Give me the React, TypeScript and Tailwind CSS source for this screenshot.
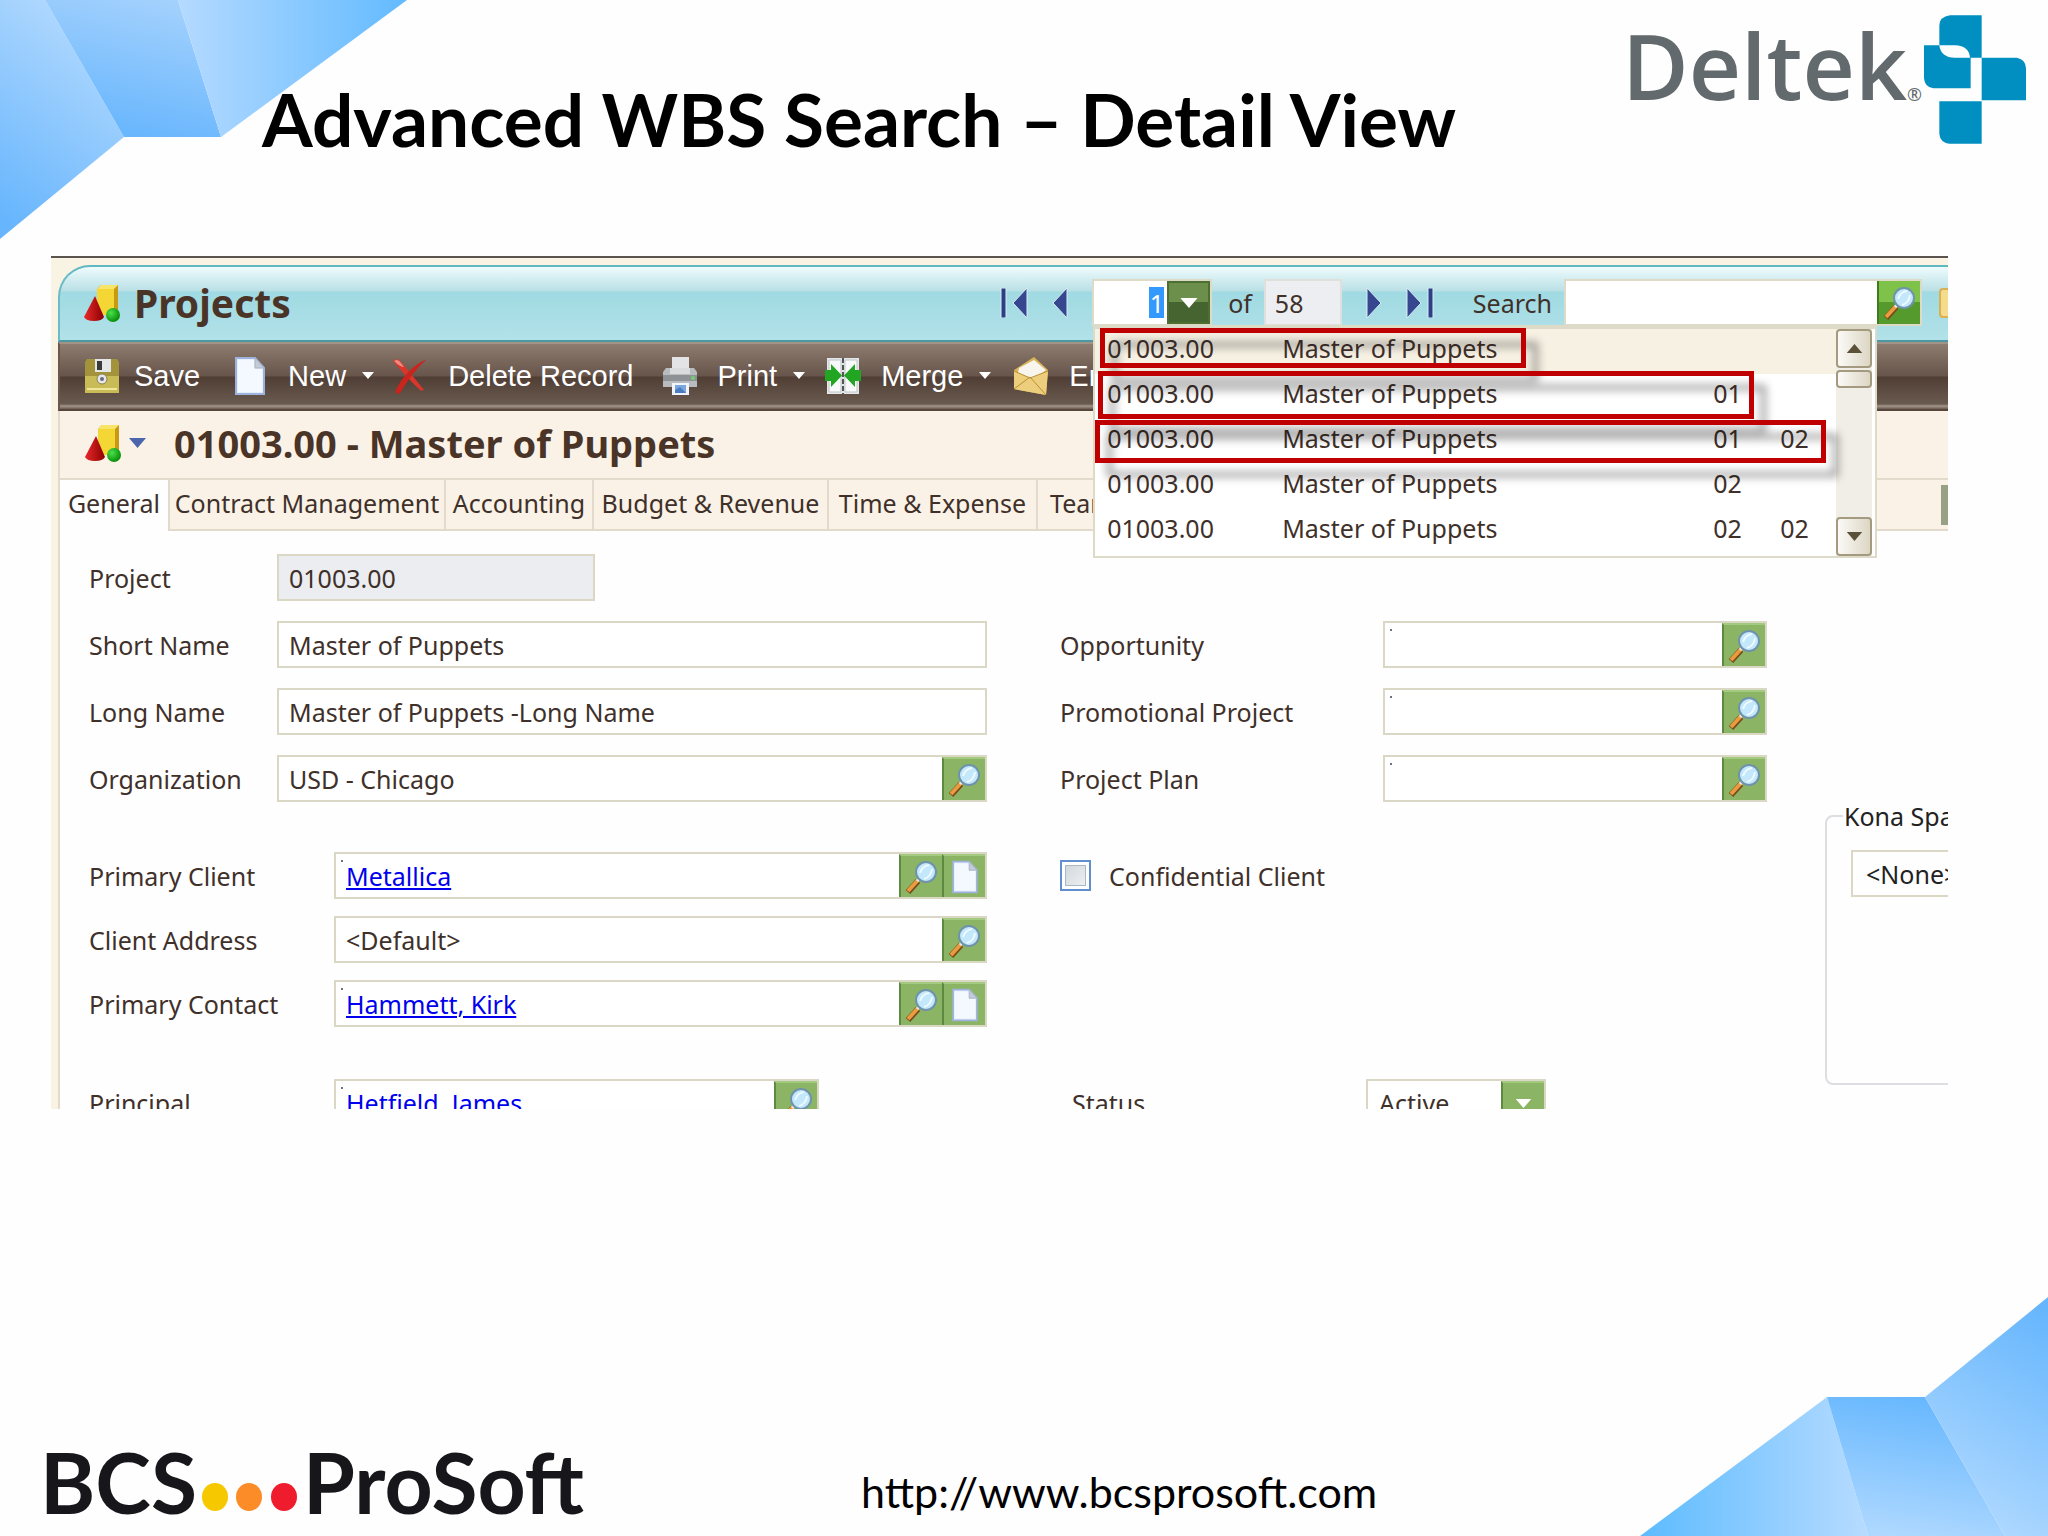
import type { ReactNode } from 'react';

const rows = [
  ['01003.00', 'Master of Puppets', '', ''],
  ['01003.00', 'Master of Puppets', '01', ''],
  ['01003.00', 'Master of Puppets', '01', '02'],
  ['01003.00', 'Master of Puppets', '02', ''],
  ['01003.00', 'Master of Puppets', '02', '02'],
];

const tabs = [
  { name: 'Contract Management', width: 'w-[276px]' },
  { name: 'Accounting', width: 'w-[148px]' },
  { name: 'Budget & Revenue', width: 'w-[235px]' },
  { name: 'Time & Expense', width: 'w-[209px]' },
];

function ShapesIcon() {
  return (
    <svg viewBox="0 0 36 38" className="h-[38px] w-9 shrink-0" aria-hidden="true">
      <defs>
        <linearGradient id="cone" x1="0" x2="1">
          <stop offset="0" stopColor="#e8292b" />
          <stop offset="1" stopColor="#8c0000" />
        </linearGradient>
        <radialGradient id="ball" cx="0.35" cy="0.35" r="0.7">
          <stop offset="0" stopColor="#4be04b" />
          <stop offset="1" stopColor="#068a06" />
        </radialGradient>
      </defs>
      <path d="M13 5 17 1H34V26L30 31H13Z" fill="#c79a12" />
      <path d="M13 5H30V31H13Z" fill="#f4d735" />
      <path d="M13 5 17 1H34L30 5Z" fill="#f7e468" />
      <path d="M11 12 20 33Q18 37 10 37Q2 37 0 33Z" fill="url(#cone)" />
      <circle cx="29" cy="31" r="7" fill="url(#ball)" />
    </svg>
  );
}

function SaveIcon() {
  return (
    <svg viewBox="0 0 36 36" className="size-9 shrink-0" aria-hidden="true">
      <path d="M3 1H33L35 4V35H1V4Z" fill="#a3933a" />
      <path d="M1 18H35V35H1Z" fill="#c9bb55" />
      <path d="M11 1H27V14H11Z" fill="#e4e6e8" />
      <path d="M13 3H18V12H13Z" fill="#3a3a38" />
      <circle cx="18" cy="21" r="5" fill="#e6e6ee" stroke="#8c8448" />
      <circle cx="18" cy="21" r="2" fill="#6a6a7a" />
      <path d="M3 31H33" stroke="#efe69a" strokeWidth="2" />
    </svg>
  );
}

function PageIcon({ className }: { className: string }) {
  return (
    <svg viewBox="0 0 32 40" className={className} aria-hidden="true">
      <path d="M2 2H21L30 12V38H2Z" fill="#e6eefa" stroke="#9db2dd" strokeWidth="2" />
      <path d="M4 4H20V13H28V36H4Z" fill="#f4f9ff" />
      <path d="M21 2 30 12H21Z" fill="#c3cbd8" stroke="#aab4c8" />
    </svg>
  );
}

function DeleteIcon() {
  return (
    <svg viewBox="0 0 36 36" className="size-9 shrink-0" aria-hidden="true">
      <path d="M1 3Q6 -1 9 4Q17 13 32 32Q29 34 27 31Q16 21 1 3Z" fill="#d9362c" />
      <path d="M35 1Q21 13 8 35Q5 37 3 34Q13 11 35 1Z" fill="#c9241d" />
      <path d="M2 3Q6 0 9 5L12 9Q8 9 2 3Z" fill="#ef8a80" />
    </svg>
  );
}

function PrintIcon() {
  return (
    <svg viewBox="0 0 36 40" className="h-10 w-9 shrink-0" aria-hidden="true">
      <path d="M10 1H27V14H10Z" fill="#e3e3e6" />
      <path d="M4 12H32L35 16V31H1V16Z" fill="#b9bcbe" />
      <path d="M1 19H35V25H1Z" fill="#8e9294" />
      <path d="M8 12H28V18H8Z" fill="#d9dbdc" />
      <circle cx="31" cy="22" r="2" fill="#6fd06f" />
      <path d="M10 27H27V39H10Z" fill="#f1f5fb" />
      <path d="M13 29H24V37H13Z" fill="#7ba7dd" />
      <path d="M13 34 18 31 24 37H13Z" fill="#4b7dc2" />
    </svg>
  );
}

function MergeIcon() {
  return (
    <svg viewBox="0 0 36 38" className="h-[38px] w-9 shrink-0" aria-hidden="true">
      <path d="M2 1H34V37H2Z" fill="#e4e7ea" />
      <path d="M4 3H16V35H4ZM20 3H32V35H20Z" fill="#f8f9fa" stroke="#c2c6ca" />
      <path d="M18 1V37" stroke="#555" strokeWidth="2" strokeDasharray="5 2" />
      <path d="M0 13H6V7L17 18.500L6 30V24H0Z" fill="#22a522" />
      <path d="M36 13H30V7L19 18.500L30 30V24H36Z" fill="#22a522" />
    </svg>
  );
}

function MailIcon() {
  return (
    <svg viewBox="0 0 36 40" className="h-10 w-9 shrink-0" aria-hidden="true">
      <path d="M1 14 21 1 35 14 33 39 1 33Z" fill="#d9b458" />
      <path d="M6 12 21 4 33 14 19 25 5 17Z" fill="#f8f4ee" />
      <path d="M1 15 18 22 35 15 33 39 1 33Z" fill="#ecce7c" />
      <path d="M1 33 17 21 33 39M1 15 17 22 35 15" fill="none" stroke="#b98f33" />
    </svg>
  );
}

function Magnifier() {
  return (
    <svg viewBox="0 0 36 36" className="size-9" aria-hidden="true">
      <path d="M4 33 14 22" stroke="#7a4a1a" strokeWidth="6" />
      <path d="M4 32 14 21" stroke="#e99b3f" strokeWidth="4" />
      <path d="M13 22 17 18" stroke="#e8e8e8" strokeWidth="3" />
      <circle cx="22" cy="13" r="10" fill="#c3e7fb" stroke="#6f93ab" strokeWidth="2" />
      <path d="M16 14Q18 7 25 6M20 20Q27 18 28 10" fill="none" stroke="#eefaff" strokeWidth="2" />
    </svg>
  );
}

function Caret({ className }: { className: string }) {
  return (
    <svg viewBox="0 0 12 7" className={className} aria-hidden="true">
      <path d="M0 0H12L6 7Z" fill="currentColor" />
    </svg>
  );
}

// record navigation arrows; pass `bar` for first/last, `flip` for forward
function NavArrow({ label, bar, flip }: { label: string; bar?: boolean; flip?: boolean }) {
  return (
    <button aria-label={label} className={flip ? 'rotate-180' : ''}>
      <svg viewBox={bar ? '0 0 28 30' : '12 0 16 30'} className={bar ? 'h-[30px] w-7' : 'h-[30px] w-4'} aria-hidden="true">
        {bar && <path d="M1 0H6V30H1Z" fill="#2f3f86" stroke="#d7eef4" />}
        <path d="M27 0V30L13 15Z" fill="#36478f" stroke="#d7eef4" />
      </svg>
    </button>
  );
}

function GreenButton({ label, children }: { label: string; children: ReactNode }) {
  return (
    <button
      aria-label={label}
      className="flex w-[43px] shrink-0 items-center justify-center border-t-2 border-l-2 border-t-[#a3cb80] border-l-[#5d8a40] bg-[#8bb565]"
    >
      {children}
    </button>
  );
}

type FieldProps = {
  id: string;
  label: string;
  value?: string;
  link?: boolean;
  search?: boolean;
  page?: boolean;
  labelWidth: string;
  boxWidth?: string;
  readOnly?: boolean;
};

function Field({ id, label, value = '', link, search, page, labelWidth, boxWidth = 'flex-1', readOnly }: FieldProps) {
  const marked = link || value === '';
  return (
    <div className="flex h-[47px] items-center">
      <label htmlFor={id} className={`shrink-0 whitespace-nowrap ${labelWidth}`}>
        {label}
      </label>
      <div className={`relative flex h-[47px] min-w-0 border-2 border-[#dad8c5] ${boxWidth} ${readOnly ? 'bg-[#ebedf0]' : 'bg-white'}`}>
        {marked && <span className="absolute top-[6px] left-[5px] size-[2px] bg-gray-500" />}
        {link ? (
          <span className="flex flex-1 items-center px-[10px]">
            <a id={id} href="#" className="text-[#0000ee] underline decoration-2 underline-offset-2">
              {value}
            </a>
          </span>
        ) : (
          <input id={id} defaultValue={value} readOnly={readOnly} className="min-w-0 flex-1 bg-transparent px-[10px] outline-none" />
        )}
        {search && (
          <GreenButton label={`Look up ${label}`}>
            <Magnifier />
          </GreenButton>
        )}
        {page && (
          <GreenButton label={`Open ${label}`}>
            <PageIcon className="h-[34px] w-7" />
          </GreenButton>
        )}
      </div>
    </div>
  );
}

function RecordList() {
  return (
    <div className="absolute top-[44px] -left-px z-10 w-[784px] border-2 border-t-4 border-[#dedac8] bg-white">
      <div className="flex">
        <table className="flex-1 table-fixed border-collapse">
          <tbody className="block pb-[2px]">
            {rows.map((row, i) => (
              <tr key={i} className={i === 0 ? 'flex h-[45px] items-center bg-[#f7f1e4] pb-2' : 'flex h-[45px] items-center pb-2'}>
                <td className="w-[187px] pl-3">{row[0]}</td>
                <td className="w-[431px]">{row[1]}</td>
                <td className="w-[67px]">{row[2]}</td>
                <td>{row[3]}</td>
              </tr>
            ))}
          </tbody>
        </table>
        <div className="flex w-9 flex-col bg-[#f1eee7]">
          <button aria-label="Scroll up" className="flex h-[39px] items-center justify-center rounded-sm border-2 border-[#a39a80] bg-linear-to-r from-[#fbfaf6] to-[#dcd6c4] text-[#5a5138]">
            <Caret className="h-[9px] w-[17px] rotate-180" />
          </button>
          <div className="mt-[2px] h-[18px] rounded-sm border-2 border-[#a39a80] bg-linear-to-r from-[#fbfaf6] to-[#dcd6c4]" />
          <button aria-label="Scroll down" className="mt-auto flex h-[39px] items-center justify-center rounded-sm border-2 border-[#a39a80] bg-linear-to-r from-[#fbfaf6] to-[#dcd6c4] text-[#5a5138]">
            <Caret className="h-[9px] w-[17px]" />
          </button>
        </div>
        <div className="w-[3px]" />
      </div>
      {/* call-outs round the three WBS levels */}
      <div className="absolute -top-px left-[5px] h-10 w-[426px] border-5 border-[#c00000] drop-shadow-[12px_14px_4px_rgba(0,0,0,0.4)]" />
      <div className="absolute top-[42px] left-[3px] h-12 w-[656px] border-5 border-[#c00000] drop-shadow-[12px_14px_4px_rgba(0,0,0,0.4)]" />
      <div className="absolute top-[91px] left-0 h-[43px] w-[731px] border-5 border-[#c00000] drop-shadow-[12px_14px_4px_rgba(0,0,0,0.4)]" />
    </div>
  );
}

function TitleBar() {
  return (
    <div className="flex h-[77px] items-center rounded-tl-[32px] border-2 border-r-0 border-t-[#5fb8c0] border-b-[#4b98a2] border-l-[#6bbcc6] bg-[linear-gradient(#eefbfd_0,#b9e0e5_24px,#a0dae2_25px,#b2e1e9_100%)] pb-[2px] pl-6">
      <ShapesIcon />
      <h2 className="ml-[14px] flex-1 text-[39px] font-bold text-[#4a3428]">Projects</h2>
      <NavArrow label="First record" bar />
      <span className="w-6" />
      <NavArrow label="Previous record" />
      <div className="relative ml-6 flex h-[47px] w-[120px] border-2 border-[#dedac8] bg-white">
        <span className="flex flex-1 items-center justify-end">
          <input aria-label="Record" defaultValue="1" className="h-[31px] w-[15px] bg-[#3399ff] text-right text-white outline-none" />
          <span className="w-[3px]" />
        </span>
        <button aria-label="Show records" className="flex w-[43px] items-center justify-center border-2 border-[#4c7032] bg-[linear-gradient(#6c8f4c_0_50%,#466430_50%)] text-white">
          <Caret className="h-[10px] w-[18px]" />
        </button>
        <RecordList />
      </div>
      <span className="ml-4">of</span>
      <input aria-label="Record count" readOnly defaultValue="58" className="ml-3 h-[47px] w-[78px] border-2 border-[#dfe0dc] bg-[#eceef1] px-[9px]" />
      <span className="w-6" />
      <NavArrow label="Next record" flip />
      <span className="w-6" />
      <NavArrow label="Last record" bar flip />
      <label htmlFor="search" className="ml-[39px]">
        Search
      </label>
      <div className="ml-3 flex h-[47px] w-[358px] border-2 border-[#dedac8] bg-white">
        <input id="search" className="min-w-0 flex-1 px-2 outline-none" />
        <button aria-label="Run search" className="flex w-[43px] items-center justify-center border-l-2 border-[#3f7a20] bg-[linear-gradient(#7fc24a_0_50%,#559a2c_50%)]">
          <Magnifier />
        </button>
      </div>
      <span className="ml-[17px] h-[30px] w-[9px] rounded-l-sm border-2 border-r-0 border-[#d9b054] bg-[#f5dc8c]" />
    </div>
  );
}

function Toolbar() {
  return (
    <div className="flex h-[69px] items-center border-t-2 border-b-2 border-l-2 border-t-[#a39286] border-b-[#56463c] border-l-[#6a584c] bg-[linear-gradient(#8f7c70_0,#67544a_32px,#503e35_33px,#695a4f_60px,#a5968a_62px,#6a5a4f_65px)] pb-[2px] pl-6 font-['Liberation_Sans',sans-serif] text-[29px] text-white">
      <button className="flex items-center gap-[14px]">
        <SaveIcon />
        Save
      </button>
      <button className="ml-8 flex items-center gap-5">
        <PageIcon className="h-10 w-9 shrink-0" />
        New
        <Caret className="-ml-1 h-[7px] w-3" />
      </button>
      <button className="ml-[18px] flex items-center gap-5">
        <DeleteIcon />
        Delete Record
      </button>
      <button className="ml-7 flex items-center gap-5">
        <PrintIcon />
        Print
        <Caret className="-ml-1 h-[7px] w-3" />
      </button>
      <button className="ml-5 flex items-center gap-5">
        <MergeIcon />
        Merge
        <Caret className="-ml-1 h-[7px] w-3" />
      </button>
      <button className="ml-[22px] flex items-center gap-5">
        <MailIcon />
        Email
      </button>
    </div>
  );
}

function ProjectForm() {
  return (
    <div className="flex border-l-2 border-[#e6d8cb] bg-[#fefefe] pt-[23px] pl-[29px]">
      <div className="min-w-0 flex-[898]">
        <div className="flex flex-col gap-5">
          <Field id="project" label="Project" value="01003.00" labelWidth="w-[188px]" boxWidth="w-[318px]" readOnly />
          <Field id="short" label="Short Name" value="Master of Puppets" labelWidth="w-[188px]" />
          <Field id="long" label="Long Name" value="Master of Puppets -Long Name" labelWidth="w-[188px]" />
          <Field id="org" label="Organization" value="USD - Chicago" labelWidth="w-[188px]" search />
        </div>
        <div className="mt-[50px] flex flex-col gap-[17px]">
          <Field id="client" label="Primary Client" value="Metallica" labelWidth="w-[245px]" link search page />
          <Field id="address" label="Client Address" value="<Default>" labelWidth="w-[245px]" search />
          <Field id="contact" label="Primary Contact" value="Hammett, Kirk" labelWidth="w-[245px]" link search page />
        </div>
        <div className="mt-[52px] h-[30px] overflow-hidden">
          <Field id="principal" label="Principal" value="Hetfield, James" labelWidth="w-[245px]" boxWidth="w-[485px]" link search />
        </div>
      </div>
      <div className="ml-[73px] min-w-0 flex-[707] pt-[67px]">
        <div className="flex flex-col gap-5">
          <Field id="opportunity" label="Opportunity" labelWidth="w-[323px]" search />
          <Field id="promo" label="Promotional Project" labelWidth="w-[323px]" search />
          <Field id="plan" label="Project Plan" labelWidth="w-[323px]" search />
        </div>
        <label className="mt-[50px] flex h-[47px] items-center gap-[18px]">
          <input
            type="checkbox"
            className="size-[31px] appearance-none border-2 border-[#5f8fcf] bg-linear-to-br from-[#ccd3d8] to-[#f3f5f6] shadow-[inset_0_0_0_3px_#fff,inset_0_0_0_4px_#a9b8c8]"
          />
          Confidential Client
        </label>
        <div className="mt-[180px] flex h-[30px] items-start overflow-hidden pl-3">
          <label htmlFor="status" className="flex h-[47px] w-[294px] items-center">
            Status
          </label>
          <div className="relative flex h-[47px] w-[180px] border-2 border-[#dad8c5] bg-white">
            <select id="status" className="flex-1 appearance-none px-[11px] outline-none">
              <option>Active</option>
            </select>
            <span className="pointer-events-none flex w-[43px] items-center justify-center border-t-2 border-l-2 border-t-[#a3cb80] border-l-[#5d8a40] bg-[#8bb565] text-white">
              <Caret className="h-[9px] w-[17px]" />
            </span>
          </div>
        </div>
      </div>
      <div className="ml-[58px] min-w-0 flex-[123] overflow-hidden pt-[246px]">
        <fieldset className="h-[285px] w-[300px] rounded-lg border-2 border-[#dcdee2] pl-6 text-[#222]">
          <legend className="-ml-2 px-px">Kona Space</legend>
          <select aria-label="Kona Space" className="mt-[18px] h-[47px] w-[240px] appearance-none border-2 border-[#dad8c5] px-[13px]">
            <option>&lt;None&gt;</option>
          </select>
        </fieldset>
      </div>
    </div>
  );
}

function DeltekLogo() {
  return (
    <div className="flex items-start pr-[22px]">
      <span className="font-['Open_Sans',sans-serif] text-[91px] leading-[130px] font-semibold text-[#636a6d]">Deltek</span>
      <span className="mt-[84px] text-[18px] leading-5 text-[#636a6d]">®</span>
      <svg viewBox="972 46 306 386" className="mt-[15px] ml-[2px] h-[129px] w-[102px]" fill="#008fc0" aria-hidden="true">
        <path d="M1050 46H1145V174H1110Q1108 138 1065 136H1018V78Q1018 50 1050 46Z" />
        <path d="M972 136H1018Q1022 172 1065 174H1112V265H1000Q974 262 972 235Z" />
        <path d="M1145 174H1250Q1276 178 1278 205V301H1145Z" />
        <path d="M1018 304H1145V432H1048Q1020 428 1018 402Z" />
      </svg>
    </div>
  );
}

export default function App() {
  return (
    <div className="relative flex min-h-screen flex-col overflow-hidden bg-[#fefefe] font-['Noto_Sans',sans-serif] text-[25px] leading-8 text-[#40302a]">
      <svg viewBox="0 0 408 240" className="absolute top-0 left-0 h-[240px] w-[408px]" aria-hidden="true">
        <defs>
          <linearGradient id="tl1" x1="0.6" y1="0" x2="0.2" y2="1">
            <stop offset="0" stopColor="#b4dafe" />
            <stop offset="1" stopColor="#66b5fd" />
          </linearGradient>
          <linearGradient id="tl2" x1="0.8" y1="0" x2="0.5" y2="1">
            <stop offset="0" stopColor="#a5d2fd" />
            <stop offset="1" stopColor="#68b6fd" />
          </linearGradient>
          <linearGradient id="tl3">
            <stop offset="0" stopColor="#b5daff" />
            <stop offset="1" stopColor="#62baff" />
          </linearGradient>
        </defs>
        <path d="M0 0H45L124 137 0 239Z" fill="url(#tl1)" />
        <path d="M45 0H178L221 137H124Z" fill="url(#tl2)" />
        <path d="M178 0H407L221 137Z" fill="url(#tl3)" />
      </svg>
      <svg viewBox="0 0 408 240" className="absolute right-0 bottom-0 h-[240px] w-[408px]" aria-hidden="true">
        <defs>
          <linearGradient id="br1">
            <stop offset="0" stopColor="#5cbbff" />
            <stop offset="1" stopColor="#b7dbff" />
          </linearGradient>
          <linearGradient id="br2" x1="0.6" y1="0" x2="0.4" y2="1">
            <stop offset="0" stopColor="#66b7fe" />
            <stop offset="1" stopColor="#aed8ff" />
          </linearGradient>
          <linearGradient id="br3" x1="0.8" y1="0" x2="0.5" y2="1">
            <stop offset="0" stopColor="#66b6fd" />
            <stop offset="1" stopColor="#b0d9ff" />
          </linearGradient>
        </defs>
        <path d="M0 240 187 101 228 240Z" fill="url(#br1)" />
        <path d="M187 101H285L365 240H228Z" fill="url(#br2)" />
        <path d="M285 101 408 1V240H365Z" fill="url(#br3)" />
      </svg>

      <header className="relative flex h-64 items-start justify-between">
        <h1 className="pt-[71px] pl-[262px] font-[Lato,sans-serif] text-[73px] leading-[96px] font-bold whitespace-nowrap text-black">
          Advanced WBS Search – Detail View
        </h1>
        <DeltekLogo />
      </header>

      <main className="relative mr-[100px] ml-[51px] overflow-hidden border-t-2 border-[#5a544e] bg-[#f9f3e4] pt-[7px] pl-[7px]">
        <TitleBar />
        <Toolbar />
        <div className="flex h-[67px] items-center border-l-2 border-[#e6d8cb] bg-[#faf2e6] pb-1 pl-[25px]">
          <ShapesIcon />
          <Caret className="ml-2 h-[10px] w-[17px] text-[#4b66ac]" />
          <h3 className="ml-7 text-[38px] font-bold text-[#4a3428]">01003.00 - Master of Puppets</h3>
        </div>
        <nav className="flex h-[53px] border-l-2 border-[#e3dacb] bg-[#faf2e6] whitespace-nowrap">
          <button className="w-[108px] border-t-2 border-[#e3dacb] bg-[#fefefe] pb-[6px]">General</button>
          {tabs.map((tab) => (
            <button key={tab.name} className={`border-2 border-r-0 border-[#e3dacb] pb-1 ${tab.width}`}>
              {tab.name}
            </button>
          ))}
          <div className="flex flex-1 items-center border-2 border-r-0 border-[#e3dacb] pl-3">
            <button className="pb-1">Team</button>
            <span className="ml-auto h-10 w-[7px] bg-[#98a184]" />
          </div>
        </nav>
        <ProjectForm />
      </main>

      <footer className="relative mt-auto flex h-[136px] items-center">
        <div className="flex w-[640px] items-end pt-7 pl-10 font-[Lato,sans-serif] text-[84px] leading-[96px] font-bold text-[#17161a]">
          BCS
          <svg viewBox="0 0 98 28" className="mx-1 mb-[19px] h-7 w-[98px]" aria-hidden="true">
            <ellipse cx="14" cy="14" rx="13" ry="14" fill="#f6c800" />
            <ellipse cx="48" cy="14" rx="13" ry="14" fill="#fb8c28" />
            <ellipse cx="83" cy="14" rx="13" ry="14" fill="#ee1c2c" />
          </svg>
          ProSoft
        </div>
        <a href="http://www.bcsprosoft.com" className="ml-[221px] pt-12 font-[Lato,sans-serif] text-[43px] leading-[48px] text-black">
          http://www.bcsprosoft.com
        </a>
      </footer>
    </div>
  );
}
